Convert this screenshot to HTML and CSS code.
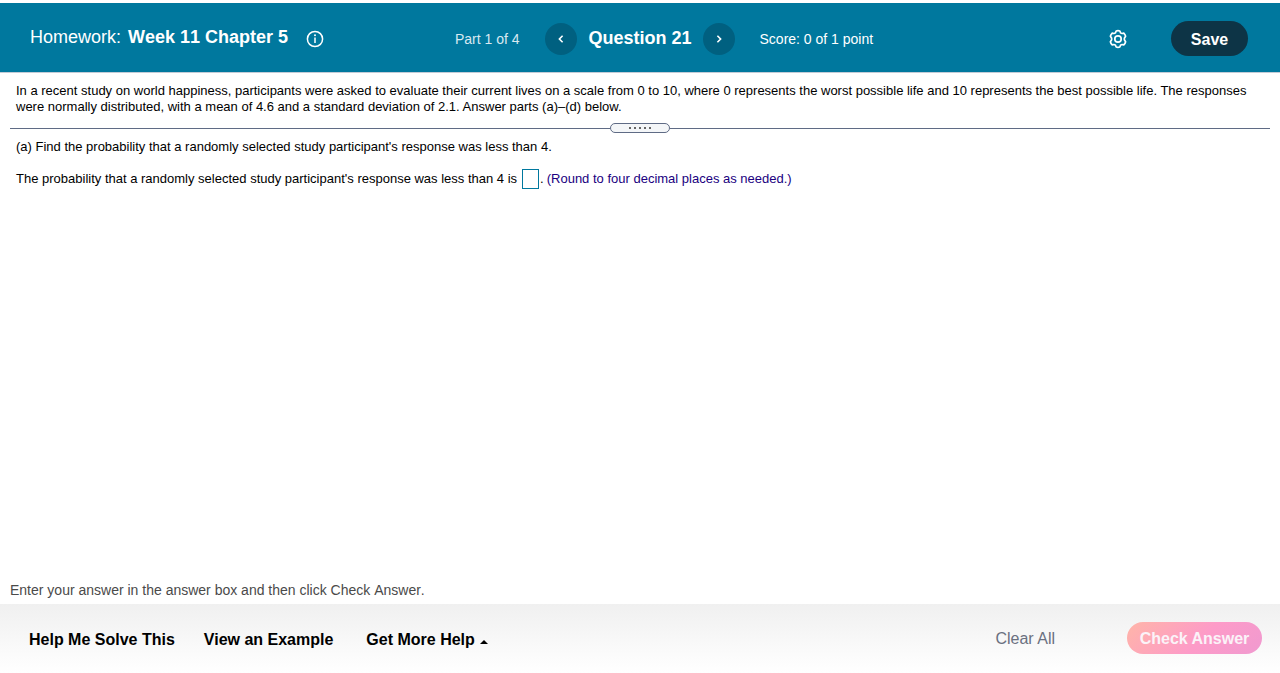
FILE: index.html
```html
<!DOCTYPE html>
<html lang="en">
<head>
<meta charset="utf-8">
<meta name="viewport" content="width=device-width, initial-scale=1">
<title>Homework: Week 11 Chapter 5</title>
<link rel="stylesheet" href="styles.css">
</head>
<body>
<header class="topbar">
  <div class="topbar-left">
    <h1 class="title"><span>Homework:</span> <strong>Week 11 Chapter 5</strong></h1>
    <button class="icon-button info" type="button" aria-label="Assignment information">
      <svg width="18" height="18" viewBox="0 0 18 18" fill="none" stroke="currentColor" stroke-width="1.5" aria-hidden="true">
        <circle cx="9" cy="9" r="7.6"/>
        <path d="M9 7.6V13"/>
        <circle cx="9" cy="5.3" r="1" fill="currentColor" stroke="none"/>
      </svg>
    </button>
    <span class="part">Part 1 of 4</span>
  </div>
  <nav class="question-nav" aria-label="Questions">
    <button class="round-button" type="button" aria-label="Previous question">
      <svg width="8" height="10" viewBox="0 0 8 10" fill="none" stroke="currentColor" stroke-width="1.6" aria-hidden="true"><path d="M5.6 1.8 2.4 5l3.2 3.2"/></svg>
    </button>
    <h2 class="question">Question 21</h2>
    <button class="round-button" type="button" aria-label="Next question">
      <svg width="8" height="10" viewBox="0 0 8 10" fill="none" stroke="currentColor" stroke-width="1.6" aria-hidden="true"><path d="M2.4 1.8 5.6 5 2.4 8.2"/></svg>
    </button>
  </nav>
  <div class="topbar-right">
    <span class="score">Score: 0 of 1 point</span>
    <button class="icon-button settings" type="button" aria-label="Settings">
      <svg width="20" height="20" viewBox="0 0 20 20" fill="none" stroke="currentColor" stroke-width="1.7" stroke-linejoin="round" aria-hidden="true">
        <path d="M8.2 2Q10 1.4 11.8 2L12.6 3.9Q13.3 4.5 14 4.5L15.8 4.2Q17.2 5.5 17.6 7.3L16.5 8.9Q16.1 10 16.5 11.1L17.6 12.7Q17.2 14.5 15.8 15.8L14 15.5Q13.3 15.5 12.6 16.1L11.8 18Q10 18.6 8.2 18L7.4 16.1Q6.7 15.5 6 15.5L4.2 15.8Q2.8 14.5 2.4 12.7L3.5 11.1Q3.9 10 3.5 8.9L2.4 7.3Q2.8 5.5 4.2 4.2L6 4.5Q6.7 4.5 7.4 3.9Z"/>
        <circle cx="10" cy="10" r="3.2"/>
      </svg>
    </button>
    <button class="save" type="button">Save</button>
  </div>
</header>
<main class="content">
  <p class="prompt">In a recent study on world happiness, participants were asked to evaluate their current lives on a scale from 0 to 10, where 0 represents the worst possible life and 10 represents the best possible life. The responses were normally distributed, with a mean of 4.6 and a standard deviation of 2.1. Answer parts (a)–(d) below.</p>
  <div class="divider">
    <button class="handle" type="button" aria-label="Resize question pane"><i></i><i></i><i></i><i></i><i></i></button>
  </div>
  <section class="part-body">
    <p>(a) Find the probability that a randomly selected study participant's response was less than 4.</p>
    <p class="answer-line">
      <label for="answer">The probability that a randomly selected study participant's response was less than 4 is</label>
      <input class="answer" id="answer" type="text"><span>.</span>
      <span class="hint">(Round to four decimal places as needed.)</span>
    </p>
  </section>
</main>
<p class="instruction">Enter your answer in the answer box and then click Check Answer.</p>
<footer class="footer">
  <button class="help" type="button">Help Me Solve This</button>
  <button class="help" type="button">View an Example</button>
  <button class="help more" type="button">Get More Help <span class="caret"></span></button>
  <button class="clear" type="button">Clear All</button>
  <button class="check" type="button">Check Answer</button>
</footer>
</body>
</html>
```
FILE: styles.css
```css
* {
  box-sizing: border-box;
}

body {
  margin: 0;
  padding-top: 3px;
  min-height: 100vh;
  display: flex;
  flex-direction: column;
  background: #fff;
  color: #000;
  font: 13px/16px "Liberation Sans", Arial, sans-serif;
}

h1, h2, p {
  margin: 0;
}

button {
  margin: 0;
  padding: 0;
  border: 0;
  background: none;
  color: inherit;
  font: inherit;
  cursor: pointer;
}

svg {
  display: block;
}

.topbar {
  display: grid;
  grid-template-columns: 1fr auto 1fr;
  align-items: center;
  min-height: 70px;
  padding-top: 2px;
  background: #00789e;
  border-bottom: 1px solid #c3cbd6;
  color: #fff;
  font-kerning: none;
}

.topbar-left,
.topbar-right,
.question-nav {
  display: flex;
  align-items: center;
}

.topbar-left {
  padding: 0 26px 0 30px;
}

.title {
  display: flex;
  gap: 7px;
  padding-bottom: 4px;
  font-size: 18px;
  line-height: 22px;
  font-weight: 400;
}

.info {
  margin-left: 18px;
}

.part,
.score {
  font-size: 14px;
  line-height: 18px;
}

.part {
  margin-left: auto;
  color: #d9e9f1;
}

.question-nav {
  gap: 11px;
}

.round-button {
  display: grid;
  place-items: center;
  width: 32px;
  height: 32px;
  border-radius: 50%;
  background: #006080;
}

.question {
  padding-bottom: 2px;
  font-size: 18px;
  line-height: 22px;
}

.topbar-right {
  padding: 0 32px 0 25px;
}

.settings {
  margin-left: auto;
}

.save {
  margin-left: 43px;
  padding-top: 2px;
  width: 77px;
  height: 35px;
  border-radius: 18px;
  background: #0d3446;
  font-size: 16px;
  font-weight: 700;
}

.content {
  flex: 1;
  padding: 10px 10px 0;
}

.prompt,
.part-body {
  padding: 0 6px;
}

.divider {
  display: flex;
  align-items: center;
  margin: 8px 0 6px;
}

.divider::before,
.divider::after {
  content: "";
  flex: 1;
  height: 1px;
  background: #5f6b85;
}

.handle {
  display: flex;
  align-items: center;
  justify-content: center;
  gap: 3px;
  width: 60px;
  height: 10px;
  border: 1px solid #5f6b85;
  border-radius: 5px;
  background: #f4f6f8;
}

.handle i {
  width: 2px;
  height: 2px;
  background: #666;
}

.answer-line {
  display: flex;
  flex-wrap: wrap;
  align-items: center;
  margin-top: 14px;
}

.answer {
  margin: 0 1px 0 5px;
  padding: 0 2px;
  width: 17px;
  height: 20px;
  border: 1px solid #00789e;
  background: #fff;
  font: inherit;
}

.hint {
  margin-left: 3px;
  color: #200080;
}

.instruction {
  padding: 0 10px 5px;
  color: #4a4a4a;
  font-size: 14px;
  line-height: 18px;
  font-kerning: none;
}

.footer {
  display: flex;
  align-items: center;
  min-height: 69px;
  padding: 0 18px 0 29px;
  background: linear-gradient(#f0f0f0, #fff);
  font-size: 16px;
  line-height: 20px;
}

.help {
  padding-top: 2px;
  margin-right: 29px;
  font-weight: 700;
}

.more {
  display: flex;
  align-items: center;
  gap: 5px;
  margin-left: 4px;
}

.caret {
  margin-top: 4px;
  border: 4px solid transparent;
  border-top: 0;
  border-bottom-color: #000;
}

.clear {
  margin-left: auto;
  color: #6a7080;
}

.check {
  margin-left: 72px;
  margin-bottom: 2px;
  padding-top: 2px;
  width: 135px;
  height: 32px;
  border-radius: 16px;
  background: linear-gradient(135deg, #ffb5a8, #fd9bc8 55%, #f09ad0);
  color: #fbf3f8;
  font-weight: 700;
}
```
